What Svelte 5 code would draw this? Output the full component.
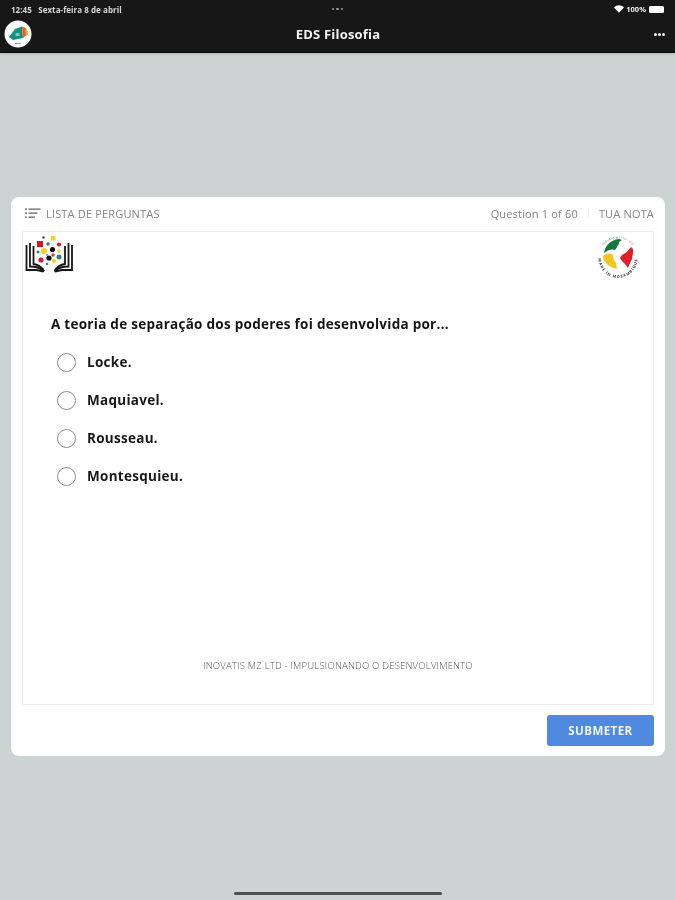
<script>
  const options = ['Locke.', 'Maquiavel.', 'Rousseau.', 'Montesquieu.'];
  const squares = [
    { x: 12, y: 5, s: 6, c: '#d8141f' }, { x: 26, y: 0, s: 4.5, c: '#f4d21f' }, { x: 17.500, y: 0.500, s: 2, c: '#222' }
  ];
  const dots = [
    { x: 23, y: 8, r: 1.8, c: '#2f8377' }, { x: 34, y: 8.500, r: 2.1, c: '#cf1f3a' },
    { x: 19, y: 15, r: 3, c: '#f2d31b' }, { x: 27.500, y: 13.500, r: 2.6, c: '#111' }, { x: 13, y: 16, r: 1.5, c: '#2f8377' },
    { x: 34, y: 15, r: 1.7, c: '#f2d31b' }, { x: 28, y: 19, r: 1.7, c: '#cf3b56' }, { x: 22, y: 19, r: 1.1, c: '#999' },
    { x: 34, y: 21, r: 2.5, c: '#2f8377' }, { x: 24, y: 22, r: 2.6, c: '#111' }, { x: 16, y: 24, r: 2.6, c: '#cf1f3a' },
    { x: 29, y: 25, r: 2.1, c: '#f2d31b' }, { x: 22, y: 28, r: 1.3, c: '#2f8377' }
  ];
</script>

<div class="screen">
  <header class="nav">
    <div class="status">
      <span class="time">12:45&nbsp;&nbsp; Sexta-feira 8 de abril</span>
      <span class="grabber"><i></i><i></i><i></i></span>
      <span class="sys">
        <svg width="10" height="8" viewBox="0 0 11 8"><path d="M5.5 8 0 2.4C3.2-.8 7.8-.8 11 2.4z" fill="#fff"/></svg>
        <span>100%</span>
        <span class="battery"></span>
      </span>
    </div>
    <div class="bar">
      <svg class="avatar" width="28" height="28" viewBox="0 0 28 28">
        <circle cx="14" cy="14" r="13.5" fill="#fff"/>
        <path d="M5 17 11 9 18 6.500 19 18 9 20z" fill="#13917f"/>
        <path d="M18 6.500 22 8 24 14 19 18z" fill="#e8622a"/>
        <path d="M21 8 24 12 24 15 22 15z" fill="#f0b72a"/>
        <rect x="11.500" y="13" width="4" height="3" fill="#7fc4b8"/>
        <rect x="11" y="23" width="6" height="1" fill="#999"/>
      </svg>
      <h1>EDS Filosofia</h1>
      <span class="more"><i></i><i></i><i></i></span>
    </div>
  </header>

  <main class="stage">
    <section class="card">
      <div class="top">
        <div class="list">
          <svg width="16" height="11" viewBox="0 0 16 11">
            <g fill="#666">
              <rect x="0" y="0.500" width="2" height="1.300"/><rect x="0" y="4.500" width="2" height="1.300"/><rect x="0" y="8.500" width="2" height="1.300"/>
              <rect x="3.500" y="0.500" width="12" height="1.300"/><rect x="3.500" y="4.500" width="9" height="1.300"/><rect x="3.500" y="8.500" width="6.500" height="1.300"/>
            </g>
          </svg>
          <span>LISTA DE PERGUNTAS</span>
        </div>
        <div class="progress">
          <span>Question 1 of 60</span>
          <span class="sep"></span>
          <span>TUA NOTA</span>
        </div>
      </div>

      <div class="sheet">
        <div class="logos">
          <svg width="50" height="38" viewBox="0 0 50 38">
            {#each squares as s}<rect x={s.x} y={s.y} width={s.s} height={s.s} fill={s.c}/>{/each}
            {#each dots as d}<circle cx={d.x} cy={d.y} r={d.r} fill={d.c}/>{/each}
            <g fill="none" stroke="#161616" stroke-width="1.800">
              <path d="M1.500 9v25h10l7 1.500"/>
              <path d="M5 7v23.500c6 0 11 1.500 14 5"/>
              <path d="M8.500 10v18c4 .5 8 3 10.500 7"/>
              <path d="M47 9v25h-10l-7 1.500"/>
              <path d="M43.500 7v23.500c-6 0-11 1.500-14 5"/>
              <path d="M40 10v18c-4 .5-8 3-10.500 7"/>
            </g>
          </svg>
          <svg width="42" height="42" viewBox="0 0 42 42">
            <defs>
              <path id="ring-low" d="M2.900 13A19.500 19.500 0 1 0 37.100 13"/>
              <path id="ring-high" d="M4.500 11A18.500 18.500 0 0 1 35.500 11"/>
            </defs>
            <path d="M6 17c1-7 6-13 15-14l3 1-3 2c0 3-1 3-2 5l-2 3c-3-1-6-1-11 3z" fill="#16773c"/>
            <path d="M5 20c3-3 8-3 10-1 0 3 1 6 3 8l1 6c-3-1-7-2-9-4-3-3-5-5-5-9z" fill="#f2c81e"/>
            <path d="M33 11l2 2 0 4-1 6-2 4-2 5-3-4-3-3-2-3 2-3 5-3z" fill="#e01f26"/>
            <text class="ring" fill="#777"><textPath href="#ring-high" startOffset="50%" text-anchor="middle">INOVATIS MZ LTD - EDS</textPath></text>
            <text class="ring ring-strong" fill="#333"><textPath href="#ring-low" startOffset="50%" text-anchor="middle">MADE IN MOZAMBIQUE</textPath></text>
          </svg>
        </div>

        <div class="question">
          <p>A teoria de separação dos poderes foi desenvolvida por...</p>
          <ul>
            {#each options as o}
              <li><span class="radio"></span><span>{o}</span></li>
            {/each}
          </ul>
        </div>

        <footer>INOVATIS MZ LTD - IMPULSIONANDO O DESENVOLVIMENTO</footer>
      </div>

      <div class="actions"><button>SUBMETER</button></div>
    </section>
  </main>

  <div class="home"></div>
</div>

<style>
  :global(body) { margin: 0; background: #cdd2d2; }
  .screen {
    position: relative;
    width: 675px;
    height: 900px;
    display: flex;
    flex-direction: column;
    background: #cdd2d2;
    font-family: "Open Sans", "Liberation Sans", sans-serif;
    overflow: hidden;
    filter: blur(.4px);
  }
  .nav {
    height: 52px;
    flex: none;
    background: #171717;
    color: #fff;
    border-bottom: 1px solid #0b0b0b;
    box-shadow: 0 1px 2px rgba(0,0,0,.15);
    display: flex;
    flex-direction: column;
  }
  .status {
    height: 16px;
    margin-top: 1px;
    padding: 0 11px;
    display: grid;
    grid-template-columns: 1fr auto 1fr;
    align-items: center;
    font-size: 8px;
    font-weight: 700;
    letter-spacing: .05px;
    color: #d8d8d8;
  }
  .time { white-space: pre; }
  .grabber, .more { display: flex; gap: 2px; }
  .grabber i { width: 2.500px; height: 2.500px; border-radius: 50%; background: #999; }
  .sys { justify-self: end; display: flex; align-items: center; gap: 2px; color: #eee; font-size: 7.500px; }
  .battery { width: 15px; height: 7px; margin-left: 1px; background: #fff; border-radius: 1.500px; }
  .bar {
    flex: 1;
    padding: 0 10px 0 11px;
    display: grid;
    grid-template-columns: 1fr auto 1fr;
    align-items: center;
  }
  .avatar { display: block; margin-left: -7px; margin-top: -1px; }
  h1 { margin: 0; font-size: 13px; font-weight: 700; line-height: 1; letter-spacing: .2px; color: #f2f2f2; }
  .more { justify-self: end; gap: 1px; }
  .more i { width: 3px; height: 3px; border-radius: 50%; background: #f2f2f2; }

  .stage { flex: 1; display: flex; align-items: center; justify-content: center; padding-left: 1px; }
  .card {
    width: 654px;
    height: 559px;
    box-sizing: border-box;
    background: #fff;
    border-radius: 8px;
    padding: 0 11px 10px;
    display: flex;
    flex-direction: column;
  }
  .top {
    height: 34px;
    flex: none;
    display: flex;
    align-items: center;
    justify-content: space-between;
    padding: 0 0 1px 3px;
    box-sizing: border-box;
    color: #858585;
    font-size: 11px;
    letter-spacing: .17px;
  }
  .list { display: flex; align-items: center; gap: 5px; }
  .progress { display: flex; align-items: center; gap: 10px; }
  .sep { width: 1px; height: 11px; background: #eee; }
  .sheet {
    flex: 1;
    min-height: 0;
    border: 1px solid #ececec;
    display: flex;
    flex-direction: column;
  }
  .logos {
    height: 47px;
    display: flex;
    justify-content: space-between;
    align-items: flex-start;
    padding: 4px 13px 0 2px;
    box-sizing: content-box;
    flex: none;
  }
  .ring { font-size: 3px; }
  .ring-strong { font-size: 3.800px; font-weight: 700; letter-spacing: .9px; }
  .question { flex: 1; padding: 32px 28px 0; }
  .question p {
    margin: 0 0 19px;
    font-size: 13.500px;
    line-height: 18px;
    font-weight: 700;
    letter-spacing: .27px;
    color: #141414;
  }
  ul { list-style: none; margin: 0; padding: 0 0 0 6px; display: flex; flex-direction: column; gap: 18px; }
  li {
    height: 20px;
    display: flex;
    align-items: center;
    gap: 11px;
    font-size: 13.500px;
    font-weight: 700;
    letter-spacing: .28px;
    color: #181818;
  }
  .radio {
    width: 19px;
    height: 19px;
    box-sizing: border-box;
    border: 1.500px solid #8d8d8d;
    border-radius: 50%;
    flex: none;
  }
  footer {
    flex: none;
    height: 45px;
    text-align: center;
    font-size: 9.500px;
    font-weight: 300;
    color: #555;
    letter-spacing: .22px;
  }
  .actions { flex: none; padding-top: 10px; display: flex; justify-content: flex-end; }
  button {
    width: 107px;
    height: 31px;
    border: 0;
    border-radius: 3px;
    background: #4f89e0;
    color: #f1f6fd;
    font: 700 11.500px "Open Sans", "Liberation Sans", sans-serif;
    letter-spacing: .45px;
    padding: 0;
  }
  .home {
    position: absolute;
    left: 234px;
    top: 892px;
    width: 208px;
    height: 3px;
    border-radius: 2px;
    background: #4b4f4f;
  }
</style>
